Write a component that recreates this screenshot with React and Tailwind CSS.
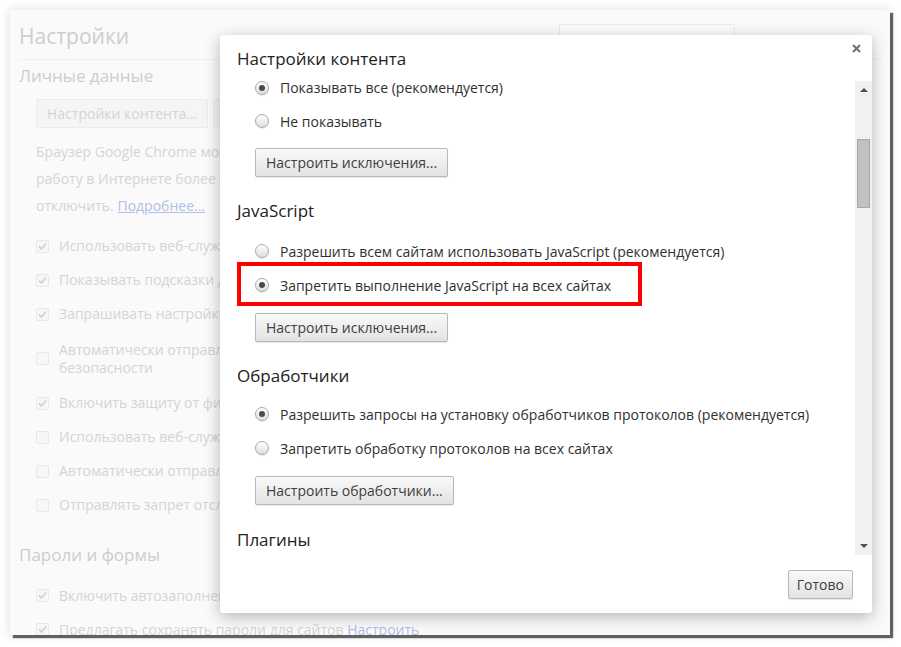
import React from "react";

const pageChecks = [
  { checked: true, text: "Использовать веб-службу для разрешения проблем, связанных с навигацией" },
  { checked: true, text: "Показывать подсказки для завершения поисковых запросов и URL" },
  { checked: true, text: "Запрашивать настройки прогнозирования сетевых действий" },
  { checked: false, text: "Автоматически отправлять в Google информацию о возможных проблемах", second: "безопасности" },
  { checked: true, text: "Включить защиту от фишинга и вредоносного ПО" },
  { checked: false, text: "Использовать веб-службу для проверки правописания" },
  { checked: false, text: "Автоматически отправлять статистику использования и отчеты о сбоях" },
  { checked: false, text: "Отправлять запрет отслеживания с исходящим трафиком" },
];

function FadedCheck({ checked }) {
  return (
    <span className="w-[13px] h-[13px] shrink-0 rounded-[2px] border border-[#e8e8e8] bg-[#f7f7f7] flex items-center justify-center">
      {checked && (
        <svg width="9" height="9" viewBox="0 0 9 9">
          <path d="M1 4.5 L3.5 7 L8 1.5" fill="none" stroke="#d2d2d2" strokeWidth="1.8" />
        </svg>
      )}
    </span>
  );
}

function Radio({ checked }) {
  return (
    <span className="w-[14px] h-[14px] shrink-0 rounded-full border border-[#a9a9a9] bg-linear-to-b from-[#ffffff] to-[#dedede] flex items-center justify-center shadow-[0_1px_1px_rgba(0,0,0,0.08)]">
      {checked && <span className="w-[6px] h-[6px] rounded-full bg-[#4a4a4a]" />}
    </span>
  );
}

function RadioRow({ checked, children, className = "h-[34px]" }) {
  return (
    <div className={"pl-[18px] flex items-center gap-[11px] text-[14px] text-[#303030] whitespace-nowrap " + className}>
      <Radio checked={checked} />
      <span>{children}</span>
    </div>
  );
}

function Button({ children, className = "px-[10px]" }) {
  return (
    <button
      className={
        "h-[29px] rounded-[2px] border border-[#b8b8b8] bg-linear-to-b from-[#f9f9f9] to-[#e3e3e3] text-[14px] text-[#404040] shadow-[0_1px_1px_rgba(0,0,0,0.1)] " +
        className
      }
    >
      {children}
    </button>
  );
}

function Heading({ children, className = "" }) {
  return <div className={"text-[17px] leading-[24px] text-[#222] " + className}>{children}</div>;
}

function FadedButton({ children }) {
  return (
    <span className="h-[29px] px-[10px] flex items-center whitespace-nowrap rounded-[2px] border border-[#ececec] bg-[#f5f5f5] text-[14px] text-[#d4d4d4]">
      {children}
    </span>
  );
}

export default function App() {
  return (
    <div className="w-[901px] h-[647px] bg-white pt-[10px] pl-[10px] overflow-hidden font-['Open_Sans','Noto_Sans',sans-serif]">
      <div className="relative w-[880px] h-[625px] bg-[#fafafa] overflow-hidden shadow-[3px_3px_1px_rgba(0,0,0,0.6),0_0_10px_rgba(0,0,0,0.15)]">
        {/* faded settings page */}
        <div className="pl-[9px] pr-[9px] pt-[11px]">
          <div className="h-[39px] flex items-start justify-between border-b border-[#f0f0f0]">
            <div className="text-[21px] leading-[30px] text-[#cdcdcd]">Настройки</div>
            <div className="mt-[3px] mr-[146px] w-[176px] h-[26px] rounded-[2px] border border-[#ececec] bg-[#fbfbfb]" />
          </div>
          <div className="mt-[4px] text-[17px] leading-[24px] text-[#cdcdcd]">Личные данные</div>
          <div className="pl-[17px]">
            <div className="mt-[11px] flex gap-[5px]">
              <FadedButton>Настройки контента...</FadedButton>
              <FadedButton>Очистить историю...</FadedButton>
            </div>
            <div className="mt-[10px] text-[14px] leading-[27px] text-[#d4d4d4] w-[620px] whitespace-nowrap">
              Браузер Google Chrome может использовать веб-службы, чтобы сделать
              <br />
              работу в Интернете более удобной. При желании эти службы можно
              <br />
              отключить. <span className="underline text-[#b3bde8]">Подробнее...</span>
            </div>
            <div className="mt-[10px]">
              {pageChecks.map((c, i) => (
                <div
                  key={i}
                  className={
                    "flex items-center gap-[10px] text-[14px] leading-[18px] text-[#d4d4d4] whitespace-nowrap " +
                    (c.second ? "h-[55px]" : "h-[34px]")
                  }
                >
                  <FadedCheck checked={c.checked} />
                  <span>
                    {c.text}
                    {c.second && (
                      <>
                        <br />
                        {c.second}
                      </>
                    )}
                  </span>
                </div>
              ))}
            </div>
          </div>
          <div className="mt-[21px] text-[17px] leading-[24px] text-[#cdcdcd]">Пароли и формы</div>
          <div className="pl-[17px] mt-[11px]">
            <div className="h-[34px] flex items-center gap-[10px] text-[14px] text-[#d4d4d4] whitespace-nowrap">
              <FadedCheck checked />
              <span>Включить автозаполнение форм одним кликом</span>
            </div>
            <div className="h-[34px] flex items-center gap-[10px] text-[14px] text-[#d4d4d4] whitespace-nowrap">
              <FadedCheck checked />
              <span>
                Предлагать сохранять пароли для сайтов <span className="text-[#b3bde8]">Настроить</span>
              </span>
            </div>
          </div>
        </div>

        {/* dialog */}
        <div className="absolute left-[210px] top-[25px] w-[652px] h-[578px] bg-white rounded-[3px] shadow-[0_4px_16px_rgba(0,0,0,0.28)] flex flex-col">
          <div className="relative pt-[12px] pl-[17px] h-[46px]">
            <Heading>Настройки контента</Heading>
            <svg className="absolute right-[11px] top-[9px]" width="9" height="9" viewBox="0 0 9 9">
              <path d="M1 1 L8 8 M8 1 L1 8" stroke="#6f6f6f" strokeWidth="2" />
            </svg>
          </div>
          <div className="flex h-[474px]">
            <div className="flex-1 overflow-hidden pl-[17px]">
              <div className="-mt-[10px]">
                <RadioRow checked className="h-[33px]">Показывать все (рекомендуется)</RadioRow>
                <RadioRow>Не показывать</RadioRow>
                <div className="pl-[18px] mt-[10px]">
                  <Button>Настроить исключения...</Button>
                </div>

                <Heading className="mt-[22px]">JavaScript</Heading>
                <div className="mt-[11px]">
                  <RadioRow>Разрешить всем сайтам использовать JavaScript (рекомендуется)</RadioRow>
                  <div className="relative">
                    <RadioRow checked>Запретить выполнение JavaScript на всех сайтах</RadioRow>
                    <span className="absolute left-0 top-[-6px] w-[405px] h-[44px] border-4 border-[#ff0000]" />
                  </div>
                </div>
                <div className="pl-[18px] mt-[11px]">
                  <Button>Настроить исключения...</Button>
                </div>

                <Heading className="mt-[22px]">Обработчики</Heading>
                <div className="mt-[9px]">
                  <RadioRow checked>
                    Разрешить запросы на установку обработчиков протоколов (рекомендуется)
                  </RadioRow>
                  <RadioRow>Запретить обработку протоколов на всех сайтах</RadioRow>
                </div>
                <div className="pl-[18px] mt-[11px]">
                  <Button>Настроить обработчики...</Button>
                </div>

                <Heading className="mt-[23px]">Плагины</Heading>
              </div>
            </div>
            {/* scrollbar */}
            <div className="w-[17px] bg-[#f1f1f1] flex flex-col items-center justify-between py-[7px]">
              <svg width="8" height="4" viewBox="0 0 8 4">
                <path d="M0 4 L4 0 L8 4 Z" fill="#505050" />
              </svg>
              <div className="flex-1 w-full px-[2px] pt-[47px]">
                <div className="h-[69px] bg-[#c1c1c1] border border-[#a9a9a9]" />
              </div>
              <svg width="8" height="4" viewBox="0 0 8 4">
                <path d="M0 0 L8 0 L4 4 Z" fill="#505050" />
              </svg>
            </div>
          </div>
          <div className="flex justify-end pt-[15px] pr-[19px]">
            <Button className="px-[8px]">Готово</Button>
          </div>
        </div>
      </div>
    </div>
  );
}
